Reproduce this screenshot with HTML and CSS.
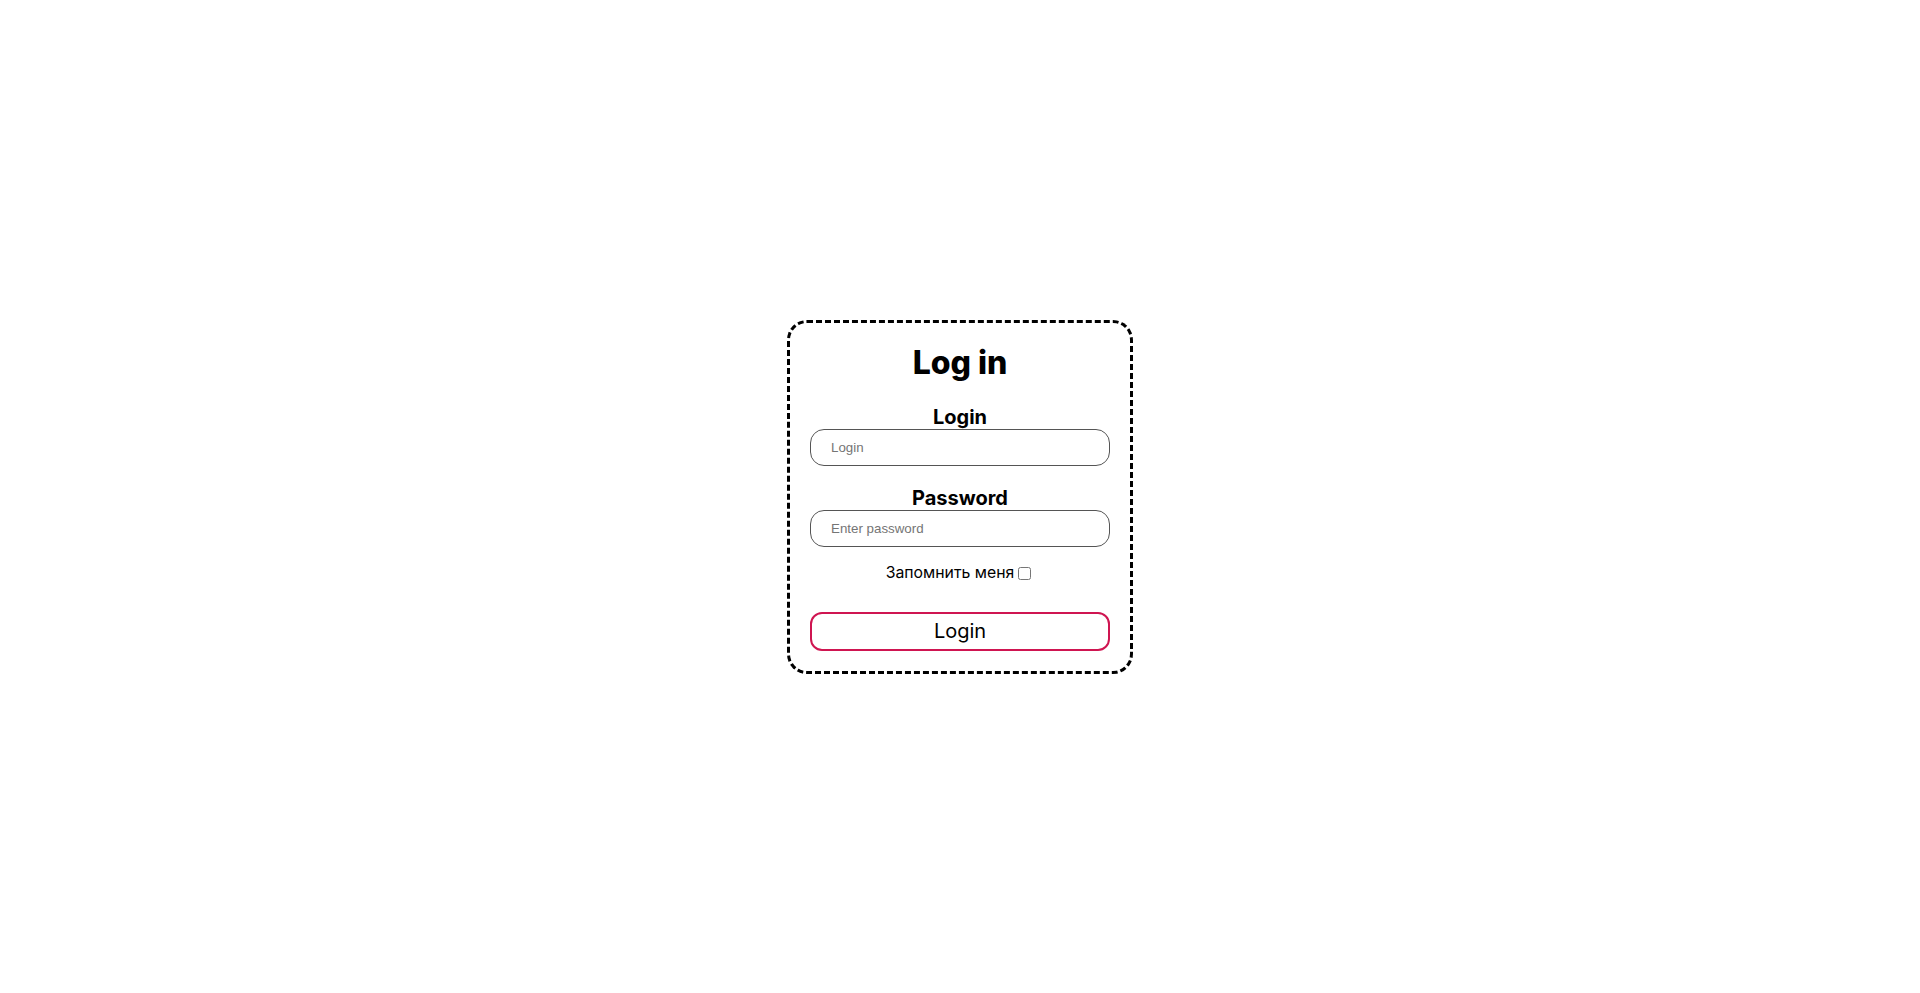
FILE: index.html
```html
<!DOCTYPE html>
<html lang="ru">
<head>
<meta charset="utf-8">
<title>Log in</title>
<link rel="stylesheet" href="styles.css">
</head>
<body>
<main class="page">
  <form class="card">
    <h1 class="title">Log in</h1>
    <label class="label" for="login">Login</label>
    <input class="field" id="login" type="text" placeholder="Login">
    <label class="label label-gap" for="password">Password</label>
    <input class="field" id="password" type="password" placeholder="Enter password">
    <div class="remember">
      <span class="remember-text">Запомнить меня</span>
      <input class="check" type="checkbox">
    </div>
    <button class="submit" type="button">Login</button>
  </form>
</main>
</body>
</html>
```

FILE: styles.css
```css
* { box-sizing: border-box; }
html, body { margin: 0; padding: 0; background: #fff; }
body { font-family: Inter, "Noto Sans", sans-serif; color: #000; }

.page {
  min-height: 993px;
  display: flex;
  align-items: center;
  justify-content: center;
}

.card {
  width: 346px;
  border: 3px dashed #000;
  border-radius: 20px;
  padding: 20px;
  display: flex;
  flex-direction: column;
  align-items: stretch;
}

.title {
  margin: 0;
  font-size: 32px;
  font-weight: 800;
  line-height: 39px;
  text-align: center;
}

.label {
  margin-top: 23px;
  font-size: 20px;
  font-weight: 700;
  line-height: 24px;
  text-align: center;
}
.label-gap { margin-top: 20px; }

.field {
  width: 300px;
  height: 37px;
  border: 1px solid #555;
  border-radius: 14px;
  padding: 0 20px;
  font-family: "Liberation Sans", Arial, sans-serif;
  font-size: 13.33px;
  color: #000;
  background: #fff;
  outline: none;
}
.field::placeholder { color: #757575; }

.remember {
  margin-top: 16px;
  display: flex;
  justify-content: center;
  align-items: center;
  height: 19px;
}
.remember-text { font-size: 15.8px; line-height: 19px; }
.check {
  width: 13px;
  height: 13px;
  margin: 4px 3px 2px 4px;
}

.submit {
  margin-top: 30px;
  height: 39px;
  border: 2px solid #cf1551;
  border-radius: 12px;
  background: #fff;
  font-family: Inter, "Noto Sans", sans-serif;
  font-size: 20px;
  color: #000;
  padding: 0;
}
```
